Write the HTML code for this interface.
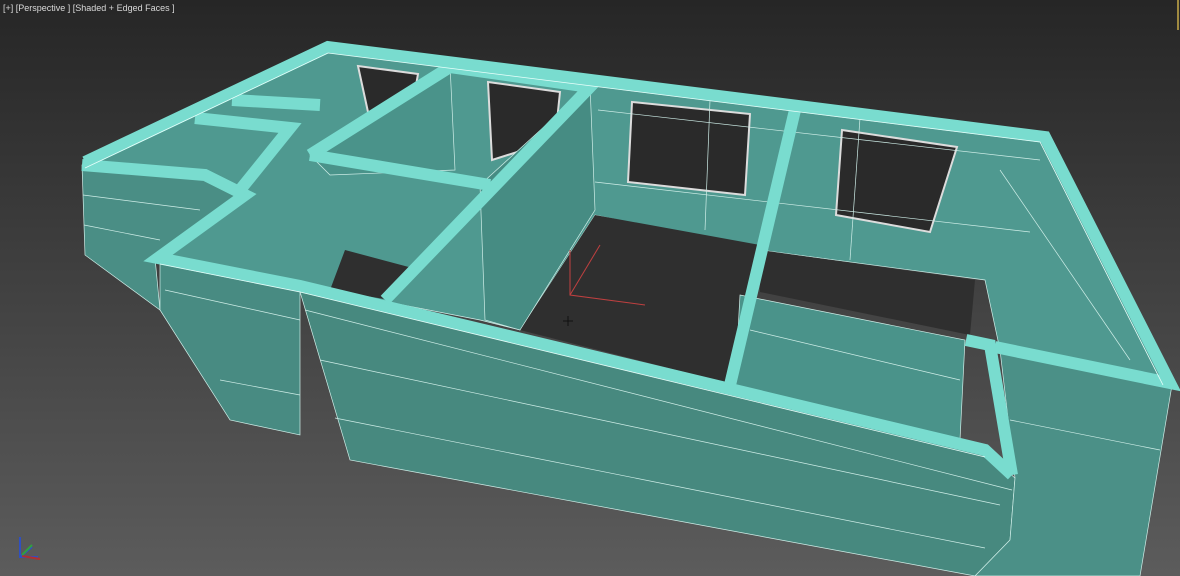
<!DOCTYPE html>
<html><head><style>
html,body{margin:0;padding:0;width:1180px;height:576px;overflow:hidden;background:#3a3a3a}
.l{position:absolute;left:3px;top:3px;color:#d8d8d8;font:9px "Liberation Sans",sans-serif;letter-spacing:0}
</style></head><body>
<svg width="1180" height="576" style="position:absolute;left:0;top:0">
<defs><linearGradient id="bg" x1="0" y1="0" x2="0" y2="1"><stop offset="0" stop-color="#262626"/><stop offset="1" stop-color="#5c5c5c"/></linearGradient></defs>
<rect width="1180" height="576" fill="url(#bg)"/>
<line x1="1178" y1="0" x2="1178" y2="30" stroke="#a08a40" stroke-width="2"/>
<polygon points="85,165 328,50 1045,140 1165,380 1000,350 985,280 760,250 595,215 520,330 480,320 300,285 160,260" fill="#4f9990" stroke="#cfeee8" stroke-width="0.7"/>
<polygon points="520,330 595,215 760,245 735,385" fill="#2f2f2f"/>
<polygon points="760,250 975,280 970,335 760,292" fill="#2f2f2f"/>
<polygon points="330,290 345,250 420,270 390,300" fill="#2f2f2f"/>
<polygon points="632,102 750,114 745,195 628,182" fill="#2a2a2a" stroke="#dcdcdc" stroke-width="2"/>
<polygon points="842,130 957,147 930,232 836,215" fill="#2a2a2a" stroke="#dcdcdc" stroke-width="2"/>
<polygon points="358,66 418,74 412,108 368,112" fill="#2a2a2a" stroke="#dcdcdc" stroke-width="2"/>
<polygon points="488,82 560,92 555,140 492,160" fill="#2a2a2a" stroke="#dcdcdc" stroke-width="2"/>
<g stroke="#cfeee8" stroke-width="0.7" fill="none">
<line x1="595" y1="182" x2="1030" y2="232"/>
<line x1="598" y1="110" x2="1040" y2="160"/>
<line x1="710" y1="100" x2="705" y2="230"/>
<line x1="860" y1="118" x2="850" y2="260"/>
<line x1="1000" y1="170" x2="1130" y2="360"/>
</g>
<polygon points="480,185 590,85 595,210 520,330 485,320" fill="#468c83" stroke="#cfeee8" stroke-width="0.7"/>
<polygon points="310,155 450,65 455,170 330,175" fill="#4a938a" stroke="#cfeee8" stroke-width="0.7"/>
<polygon points="740,295 965,340 960,440 735,385" fill="#4a938a" stroke="#cfeee8" stroke-width="0.7"/>
<line x1="750" y1="330" x2="960" y2="380" stroke="#cfeee8" stroke-width="0.7"/>
<polygon points="82,165 205,175 245,195 155,258 160,310 85,255" fill="#4a8e85" stroke="#cfeee8" stroke-width="0.7"/>
<line x1="83" y1="195" x2="200" y2="210" stroke="#cfeee8" stroke-width="0.7"/>
<line x1="84" y1="225" x2="160" y2="240" stroke="#cfeee8" stroke-width="0.7"/>
<polygon points="160,258 300,285 300,435 230,420 160,310" fill="#488b82" stroke="#cfeee8" stroke-width="0.7"/>
<line x1="165" y1="290" x2="300" y2="320" stroke="#cfeee8" stroke-width="0.7"/>
<line x1="220" y1="380" x2="300" y2="395" stroke="#cfeee8" stroke-width="0.7"/>
<polygon points="298,285 985,452 1015,478 1010,540 975,576 350,460" fill="#47897f" stroke="#cfeee8" stroke-width="0.7"/>
<line x1="305" y1="310" x2="1012" y2="490" stroke="#cfeee8" stroke-width="0.7"/>
<line x1="320" y1="360" x2="1000" y2="505" stroke="#cfeee8" stroke-width="0.7"/>
<line x1="335" y1="418" x2="985" y2="548" stroke="#cfeee8" stroke-width="0.7"/>
<polygon points="1000,350 1172,385 1140,576 975,576 1010,540 1015,478" fill="#4b9087" stroke="#cfeee8" stroke-width="0.7"/>
<line x1="1010" y1="420" x2="1160" y2="450" stroke="#cfeee8" stroke-width="0.7"/>
<g fill="none" stroke="#79dccf" stroke-width="12" stroke-linejoin="miter">
<polyline points="85,162 328,47 1045,137 1170,383 995,347"/>
<polyline points="82,165 205,175 245,195 158,258 300,286 985,450 1012,475"/>
<polyline points="966,340 990,345 1012,475"/>
<polyline points="310,155 450,67 590,87 385,300"/>
<polyline points="310,155 490,185"/>
<polyline points="795,110 730,385"/>
<polyline points="232,100 320,105"/>
<polyline points="195,118 290,128 240,190"/>
</g>
<g fill="none" stroke="#e8fffb" stroke-width="0.8">
<polyline points="85,168 328,53 1040,142 1163,385"/>
<polyline points="160,264 300,292 985,457"/>
</g>
<polyline points="570,250 570,295 645,305" fill="none" stroke="#c04040" stroke-width="1"/>
<line x1="570" y1="295" x2="600" y2="245" stroke="#c04040" stroke-width="1"/>
<path d="M563 321h10M568 316v10" stroke="#111" stroke-width="1"/>
<path d="M20 537v20h18M20 557l12-10" stroke="#3050c0" stroke-width="2" fill="none"/>
<path d="M22 556l18 3" stroke="#b03030" stroke-width="2"/>
<path d="M22 555l10-10" stroke="#30a040" stroke-width="2"/>
</svg>
<div class="l">[+] [Perspective ] [Shaded + Edged Faces ]</div>
</body></html>
